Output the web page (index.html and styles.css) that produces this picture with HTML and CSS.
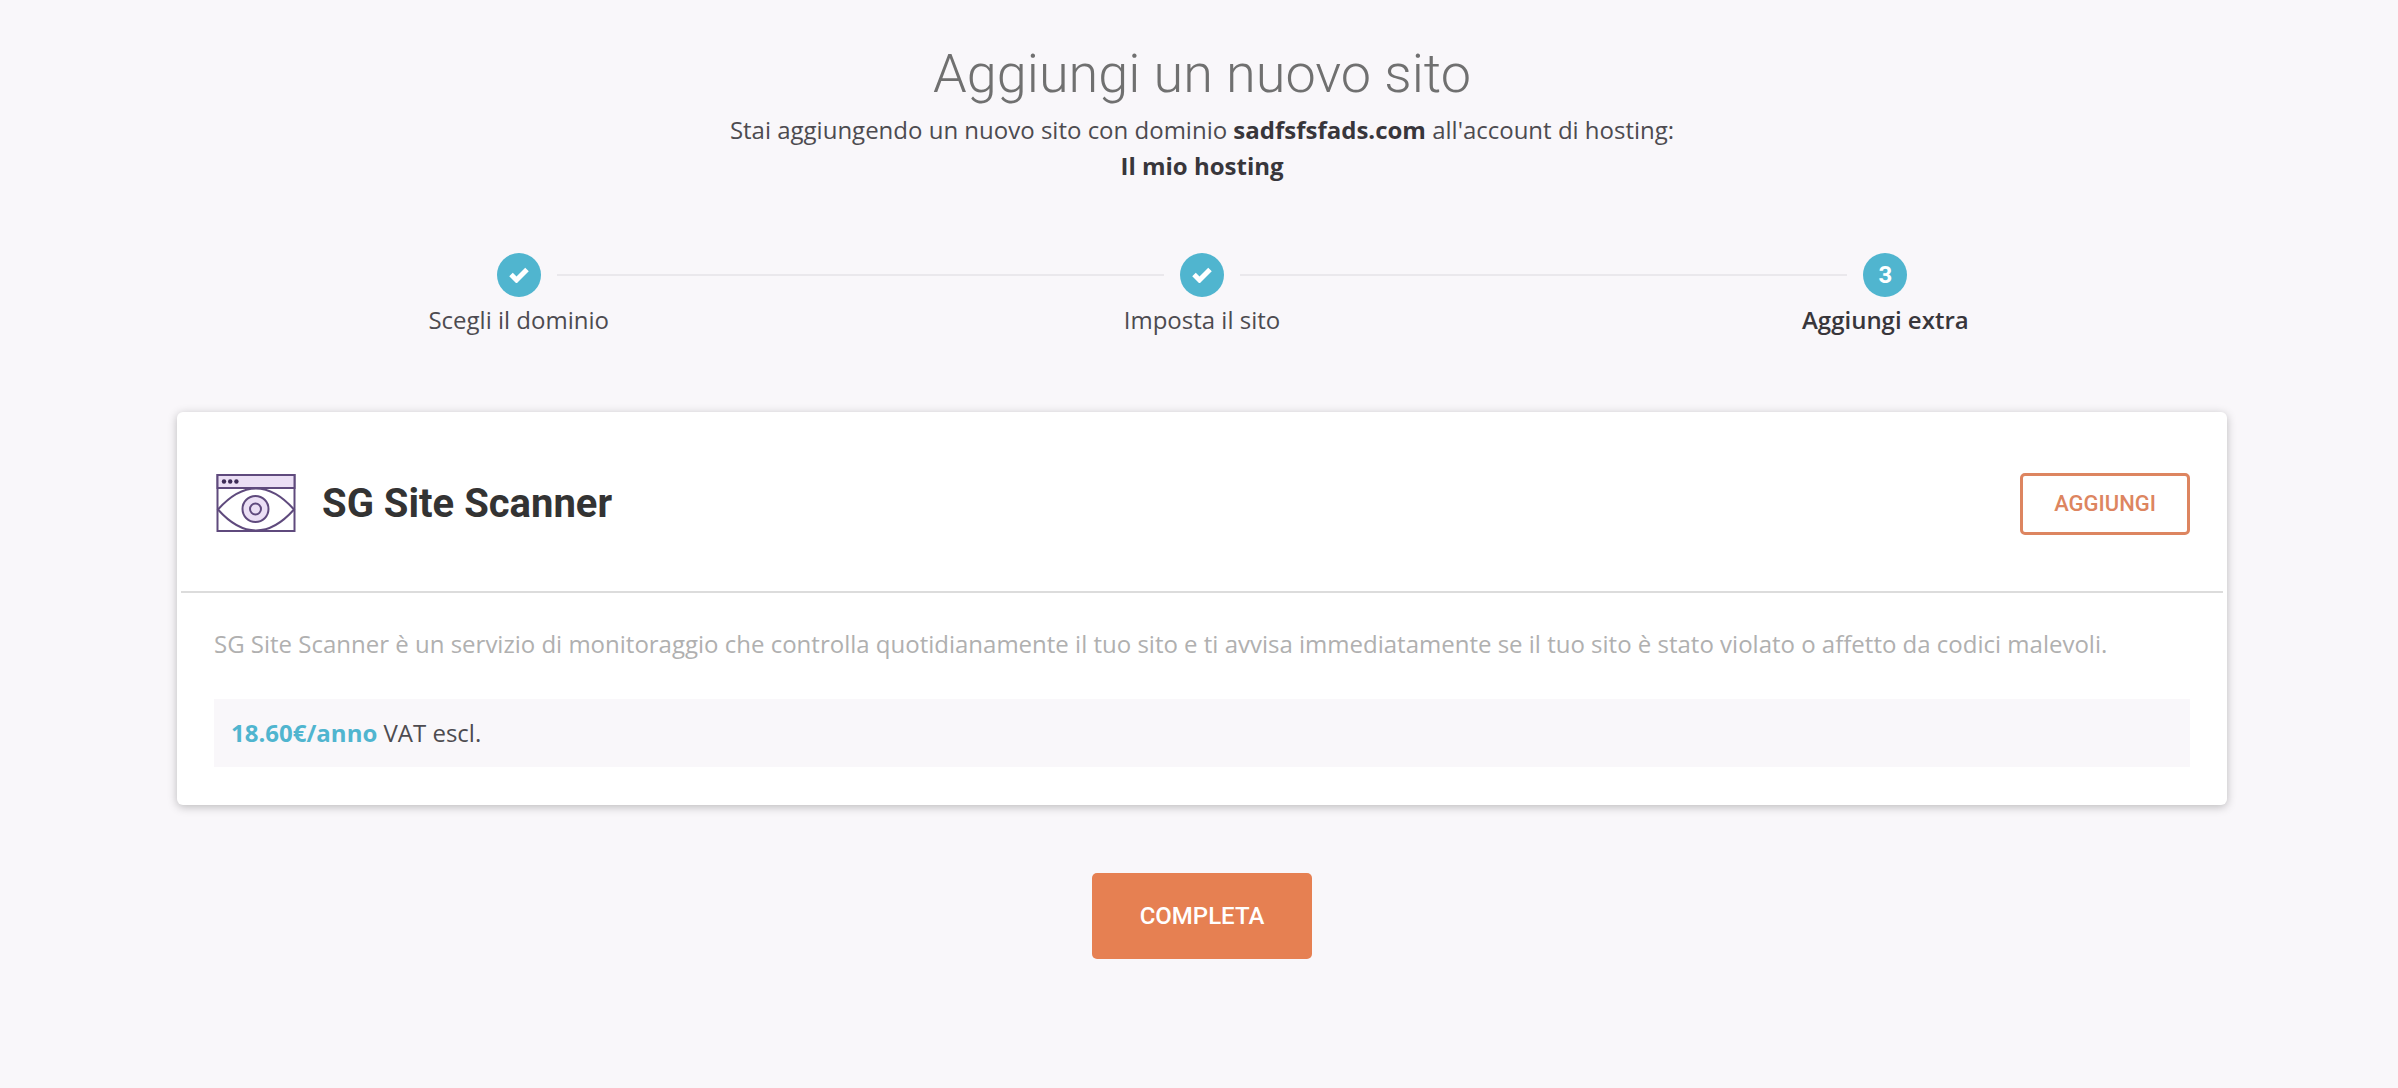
FILE: index.html
```html
<!DOCTYPE html>
<html lang="it">
  <head>
    <meta charset="utf-8">
    <title>Aggiungi un nuovo sito</title>

    <link rel="stylesheet" href="styles.css">
  </head>
  <body>
    <main class="page">
      <header class="intro">
        <h1>Aggiungi un nuovo sito</h1>
        <p>
          Stai aggiungendo un nuovo sito con dominio <strong>sadfsfsfads.com</strong> all'account di hosting:<br>
          <strong>Il mio hosting</strong>
        </p>
      </header>

      <ol class="steps">
        <li class="step">
          <div class="track">
            <span class="circle">
              <svg width="20" height="16" viewBox="0 0 20 16"><path d="M2 7.5L7.5 13L18 2.5" fill="none" stroke="#fff" stroke-width="5"/></svg>
            </span>
          </div>
          <span class="label">Scegli il dominio</span>
        </li>
        <li class="step">
          <div class="track">
            <span class="circle">
              <svg width="20" height="16" viewBox="0 0 20 16"><path d="M2 7.5L7.5 13L18 2.5" fill="none" stroke="#fff" stroke-width="5"/></svg>
            </span>
          </div>
          <span class="label">Imposta il sito</span>
        </li>
        <li class="step current">
          <div class="track"><span class="circle">3</span></div>
          <span class="label">Aggiungi extra</span>
        </li>
      </ol>

      <section class="card">
        <div class="card-header">
          <svg class="icon" width="80" height="60" viewBox="0 0 80 60" fill="none" stroke="#5f4a7d" stroke-width="2">
            <rect x="1.5" y="1" width="77" height="56" fill="#fff"/>
            <rect x="1.5" y="1" width="77" height="13" fill="#ebdff5"/>
            <path d="M2 35.5C14 22 26 14.5 40 14.5S66 22 78 35.5C66 49 54 56.5 40 56.5S14 49 2 35.5Z" fill="#fff"/>
            <circle cx="39.5" cy="35" r="13" fill="#ebdff5"/>
            <circle cx="39.5" cy="35" r="5.5"/>
            <g fill="#3d2c57" stroke="none">
              <circle cx="8" cy="7.5" r="2.2"/>
              <circle cx="14.2" cy="7.5" r="2.2"/>
              <circle cx="20.4" cy="7.5" r="2.2"/>
            </g>
          </svg>
          <h2>SG Site Scanner</h2>
          <button type="button" class="btn add">AGGIUNGI</button>
        </div>
        <div class="card-body">
          <p>SG Site Scanner è un servizio di monitoraggio che controlla quotidianamente il tuo sito e ti avvisa immediatamente se il tuo sito è stato violato o affetto da codici malevoli.</p>
          <div class="price"><strong>18.60€/anno</strong> VAT escl.</div>
        </div>
      </section>

      <button type="button" class="btn complete">COMPLETA</button>
    </main>
  </body>
</html>
```
FILE: styles.css
```css
body, h1, h2, p, ol {
  margin: 0;
  padding: 0;
}

body {
  background-color: #f9f7fa;
  color: #4d4b50;
  font-family: 'Open Sans', sans-serif;
  font-size: 24px;
  line-height: 36px;
}

.page {
  display: flex;
  flex-direction: column;
  padding: 42px 171px 60px 177px;
}

.intro {
  text-align: center;
}

h1 {
  margin-bottom: 6px;
  color: #707070;
  font-family: Roboto, sans-serif;
  font-size: 54px;
  font-weight: 300;
  line-height: 64px;
}

.intro strong {
  color: #38363b;
}

/* STEPS */
.steps {
  display: flex;
  margin-top: 69px;
  list-style: none;
}

.step {
  flex: 1;
  text-align: center;
}

.track {
  display: flex;
  align-items: center;
  gap: 16px;
  margin-bottom: 5px;
}

.track:before, .track:after {
  content: "";
  flex: 1;
  height: 2px;
  background-color: #eae8ec;
}

.step:first-child .track:before, .step:last-child .track:after {
  background-color: transparent;
}

.circle {
  display: flex;
  align-items: center;
  justify-content: center;
  width: 44px;
  height: 44px;
  border-radius: 50%;
  background-color: #50b5cf;
  color: #fff;
  font-family: Roboto, sans-serif;
  font-weight: bold;
}

.label {
  display: block;
}

.current .label {
  color: #38363b;
  font-weight: 600;
}

/* CARD */
.card {
  margin-top: 74px;
  padding: 0 4px;
  border-radius: 6px;
  background-color: #fff;
  box-shadow: 0 2px 10px rgba(0, 0, 0, 0.25);
}

.card-header {
  display: flex;
  align-items: center;
  height: 175px;
  padding: 4px 33px 0 35px;
  border-bottom: 2px solid #dcdcdc;
}

h2 {
  flex: 1;
  margin-left: 26px;
  color: #333;
  font-family: Roboto, sans-serif;
  font-size: 40px;
  font-weight: bold;
  line-height: 48px;
}

.card-body {
  padding: 33px 33px 38px;
}

.card-body p {
  color: #b0b0b0;
}

.price {
  margin-top: 37px;
  padding: 16px 17px;
  background-color: #f9f7fa;
}

.price strong {
  color: #50b5cf;
}

/* BUTTONS */
.btn {
  border-radius: 5px;
  font-family: Roboto, sans-serif;
  font-weight: 500;
  cursor: pointer;
}

.add {
  padding: 15px 31px;
  border: 3px solid #dd8560;
  background-color: #fff;
  color: #dd8560;
  font-size: 22px;
  line-height: 26px;
}

.complete {
  align-self: center;
  margin-top: 68px;
  padding: 28px 48px;
  border: 0;
  background-color: #e68052;
  color: #fff;
  font-size: 24px;
  line-height: 30px;
}
```
